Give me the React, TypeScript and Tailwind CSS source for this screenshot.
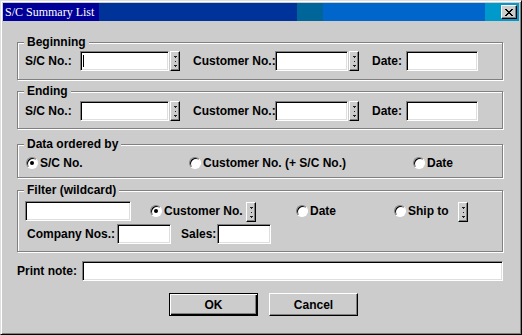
import React from 'react';

const field =
  'h-[20px] bg-white border border-t-[#808080] border-l-[#808080] border-b-white border-r-white shadow-[inset_1px_1px_0_#000,inset_-1px_-1px_0_#dfdfdf]';

function Spin() {
  return (
    <div className="w-[10px] h-[20px] bg-[#cccccc] border border-t-white border-l-white border-r-black border-b-black shadow-[inset_-1px_-1px_0_#808080] flex items-center justify-center">
      <svg width="3" height="13" viewBox="0 0 3 13" shapeRendering="crispEdges">
        <path d="M0 1h3v1H0zM1 2h1v1H1z" fill="#202020" />
        <path d="M1 6h1v1H1z" fill="#202020" />
        <path d="M0 10h3v1H0zM1 11h1v1H1z" fill="#202020" />
      </svg>
    </div>
  );
}

function Radio({ checked, label, className }: { checked?: boolean; label: string; className?: string }) {
  return (
    <div className={`flex items-center ${className ?? ''}`}>
      <div className="w-[12px] h-[12px] rounded-full bg-white border border-t-[#808080] border-l-[#808080] border-b-white border-r-white shadow-[inset_1px_1px_0_#000] flex items-center justify-center shrink-0">
        {checked && <div className="w-[4px] h-[4px] rounded-full bg-black" />}
      </div>
      <span className="ml-[2px] whitespace-nowrap">{label}</span>
    </div>
  );
}

function Group({ title, className, children }: { title: string; className?: string; children: React.ReactNode }) {
  return (
    <div className={`relative w-[486px] border border-[#808080] shadow-[1px_1px_0_#fff,inset_1px_1px_0_#fff] ${className ?? ''}`}>
      <span className="absolute left-[6px] -top-[8px] px-[3px] leading-[14px] bg-[#cccccc]">{title}</span>
      {children}
    </div>
  );
}

function RangeRow({ caret }: { caret?: boolean }) {
  return (
    <div className="flex items-center h-[20px] pl-[7px]">
      <span className="w-[55px]">S/C No.:</span>
      <div className={`${field} w-[89px] flex items-center pl-[2px]`}>
        {caret && <span className="w-[1px] h-[12px] bg-black" />}
      </div>
      <div className="ml-[1px]">
        <Spin />
      </div>
      <span className="ml-[13px] w-[82px] whitespace-nowrap">Customer No.:</span>
      <div className={`${field} w-[73px]`} />
      <div className="ml-[1px]">
        <Spin />
      </div>
      <span className="ml-[13px] w-[34px]">Date:</span>
      <div className={`${field} w-[72px]`} />
    </div>
  );
}

export default function App() {
  return (
    <div className="w-[522px] h-[335px] bg-[#cccccc] border border-t-[#dfdfdf] border-l-[#dfdfdf] border-r-black border-b-black shadow-[inset_1px_1px_0_#fff,inset_-1px_-1px_0_#808080] p-[2px] font-['Liberation_Sans',Arial,sans-serif] text-[12px] font-bold text-black">
      {/* title bar */}
      <div className="flex h-[18px]">
        <div className="w-[96px] bg-[#000099] pl-[2px] text-white font-normal font-['Liberation_Serif','Times_New_Roman',serif] text-[12px] leading-[18px] whitespace-nowrap">
          S/C Summary List
        </div>
        <div className="w-[198px] bg-[#003399]" />
        <div className="w-[26px] bg-[#006699]" />
        <div className="w-[162px] bg-[#0066cc]" />
        <div className="flex-1 bg-[#0099cc] flex items-center justify-end pr-[2px]">
          <div className="w-[16px] h-[14px] bg-[#cccccc] border border-t-white border-l-white border-r-black border-b-black shadow-[inset_-1px_-1px_0_#808080] flex items-center justify-center">
            <svg width="8" height="7" viewBox="0 0 8 7" shapeRendering="crispEdges">
              <path d="M0 0h2v1h1v1h2V1h1V0h2v1H7v1H6v1H5v1h1v1h1v1h1v1H6V6H5V5H3v1H2v1H0V6h1V5h1V4h1V3H2V2H1V1H0z" fill="#000" />
            </svg>
          </div>
        </div>
      </div>

      <div className="pl-[14px]">
        <Group title="Beginning" className="mt-[21px] h-[38px] pt-[8px]">
          <RangeRow caret />
        </Group>

        <Group title="Ending" className="mt-[11px] h-[38px] pt-[9px]">
          <RangeRow />
        </Group>

        <Group title="Data ordered by" className="mt-[15px] h-[34px] pt-[10px]">
          <div className="flex items-center h-[16px] pl-[8px]">
            <Radio checked label="S/C No." className="w-[163px]" />
            <Radio label="Customer No. (+ S/C No.)" className="w-[224px]" />
            <Radio label="Date" />
          </div>
        </Group>

        <Group title="Filter (wildcard)" className="mt-[12px] h-[62px] pt-[10px]">
          <div className="flex items-center h-[20px] pl-[7px]">
            <div className={`${field} w-[106px]`} />
            <Radio checked label="Customer No." className="ml-[19px] w-[96px]" />
            <div className="mt-[2px]">
              <Spin />
            </div>
            <Radio label="Date" className="ml-[40px] w-[98px]" />
            <Radio label="Ship to" className="w-[64px]" />
            <div className="mt-[2px]">
              <Spin />
            </div>
          </div>
          <div className="flex items-center h-[20px] pl-[7px] mt-[3px]">
            <span className="ml-[2px] w-[90px] whitespace-nowrap">Company Nos.:</span>
            <div className={`${field} w-[54px]`} />
            <span className="ml-[10px] w-[36px]">Sales:</span>
            <div className={`${field} w-[54px]`} />
          </div>
        </Group>

        <div className="flex items-center mt-[9px] h-[20px]">
          <span className="w-[65px] whitespace-nowrap">Print note:</span>
          <div className={`${field} w-[421px]`} />
        </div>

        <div className="flex mt-[12px]">
          <button className="ml-[152px] w-[89px] h-[23px] bg-[#cccccc] border border-black shadow-[inset_1px_1px_0_#fff,inset_-1px_-1px_0_#000,inset_-2px_-2px_0_#808080] flex items-center justify-center">
            OK
          </button>
          <button className="ml-[11px] w-[89px] h-[23px] bg-[#cccccc] border border-t-white border-l-white border-r-black border-b-black shadow-[inset_-1px_-1px_0_#808080] flex items-center justify-center">
            Cancel
          </button>
        </div>
      </div>
    </div>
  );
}
